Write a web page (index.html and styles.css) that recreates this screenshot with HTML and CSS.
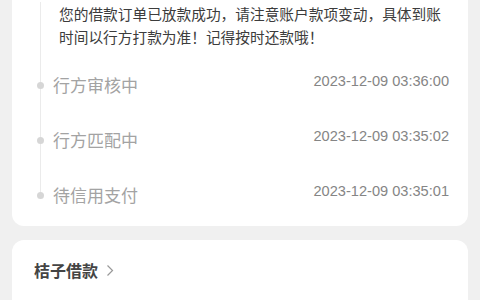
FILE: index.html
```html
<!DOCTYPE html>
<html lang="zh-CN">
  <head>
    <meta charset="UTF-8" />
    <meta name="viewport" content="width=device-width, initial-scale=1.0" />
    <title>借款进度</title>
    <link rel="stylesheet" href="styles.css">
  </head>
  <body>
    <div class="card progress">
      <div class="timeline">
        <p class="message">您的借款订单已放款成功，请注意账户款项变动，具体到账时间以行方打款为准！记得按时还款哦！</p>
        <div class="step">
          <span class="label">行方审核中</span>
          <span class="time">2023-12-09 03:36:00</span>
        </div>
        <div class="step">
          <span class="label">行方匹配中</span>
          <span class="time">2023-12-09 03:35:02</span>
        </div>
        <div class="step">
          <span class="label">待信用支付</span>
          <span class="time">2023-12-09 03:35:01</span>
        </div>
      </div>
    </div>

    <div class="card product">
      <a class="product-link" href="#">
        桔子借款
        <svg width="8" height="13" viewBox="0 0 8 13">
          <path d="M1.5 1.5 L6.5 6.5 L1.5 11.5" fill="none" stroke="#999" stroke-width="1.2" />
        </svg>
      </a>
    </div>
  </body>
</html>
```

FILE: styles.css
```css
body {
  font-family: "Noto Sans CJK SC", "Liberation Sans", sans-serif;
  margin: 0;
  padding: 0 12px;
  background-color: #f0f0f0;
}
.card {
  background-color: #fff;
  border-radius: 12px;
}
.progress {
  border-radius: 0 0 12px 12px;
  padding: 2px 19px 4px 28px;
}
.timeline {
  position: relative;
}
.timeline::before {
  content: "";
  position: absolute;
  top: 0;
  bottom: 29px;
  left: 0;
  width: 1px;
  background-color: #ebebeb;
}
.message {
  margin: 0 0 9px;
  padding-left: 19px;
  font-size: 14.7px;
  line-height: 23px;
  color: #3c3c3c;
}
.step {
  position: relative;
  display: flex;
  justify-content: space-between;
  align-items: flex-start;
  padding: 16px 0 15px 13px;
}
.step::before {
  content: "";
  position: absolute;
  left: -3px;
  top: 25px;
  width: 7px;
  height: 7px;
  border-radius: 50%;
  background-color: #d6d6d6;
}
.label {
  font-size: 17px;
  line-height: 24px;
  color: #a3a3a3;
}
.time {
  font-family: "Liberation Sans", Arial, sans-serif;
  font-size: 14.6px;
  line-height: 16px;
  color: #858585;
}
.product {
  margin-top: 14px;
  padding: 18px 22px 30px;
}
.product-link {
  display: inline-flex;
  align-items: center;
  gap: 8px;
  font-size: 16px;
  line-height: 24px;
  font-weight: bold;
  color: #444;
  text-decoration: none;
}
```
